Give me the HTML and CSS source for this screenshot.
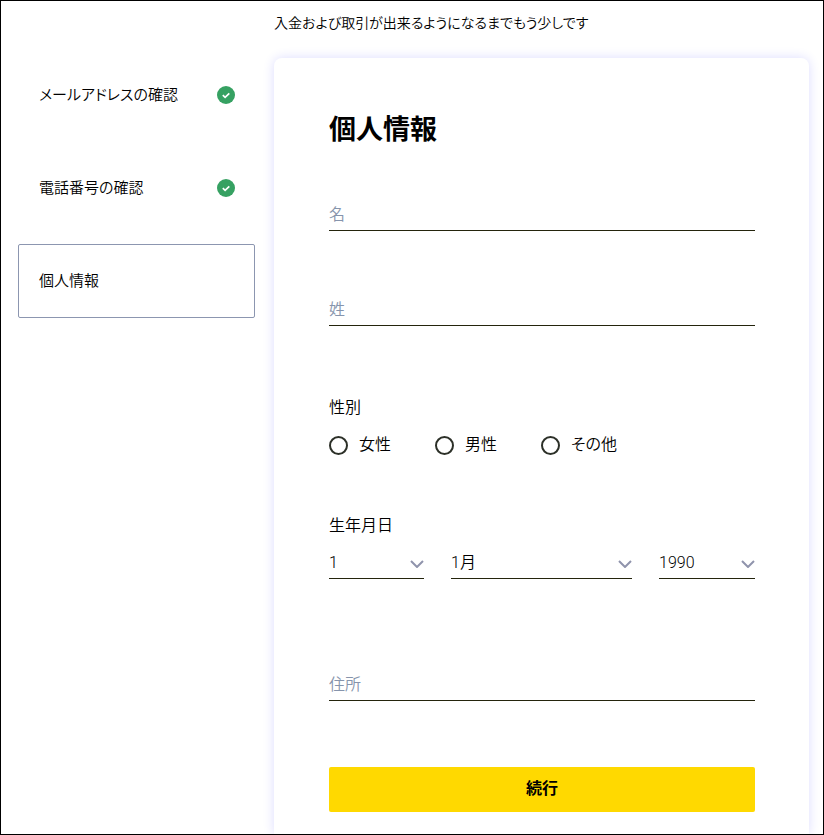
FILE: index.html
```
<!DOCTYPE html>
<html lang="ja">
<head>
    <meta charset="UTF-8">
    <meta name="viewport" content="width=device-width, initial-scale=1.0">
    <title>個人情報</title>
    <link rel="stylesheet" href="styles.css">
</head>
<body>
    <header class="page-header">
        <p class="notice">入金および取引が出来るようになるまでもう少しです</p>
    </header>

    <div class="layout">
        <!-- Steps -->
        <nav>
            <ol class="steps">
                <li class="step">
                    <span>メールアドレスの確認</span>
                    <svg class="check" viewBox="0 0 18 18" aria-hidden="true">
                        <circle cx="9" cy="9" r="9" fill="#36a162"/>
                        <path d="M5.8 9.2l2.3 2.2 4.2-4" fill="none" stroke="#fff" stroke-width="1.7"/>
                    </svg>
                </li>
                <li class="step">
                    <span>電話番号の確認</span>
                    <svg class="check" viewBox="0 0 18 18" aria-hidden="true">
                        <circle cx="9" cy="9" r="9" fill="#36a162"/>
                        <path d="M5.8 9.2l2.3 2.2 4.2-4" fill="none" stroke="#fff" stroke-width="1.7"/>
                    </svg>
                </li>
                <li class="step active" aria-current="step">
                    <span>個人情報</span>
                </li>
            </ol>
        </nav>

        <!-- Form -->
        <main class="card">
            <h1>個人情報</h1>
            <form>
                <div class="names">
                    <input class="field" type="text" name="first-name" placeholder="名" aria-label="名">
                    <input class="field" type="text" name="last-name" placeholder="姓" aria-label="姓">
                </div>

                <fieldset class="gender">
                    <legend>性別</legend>
                    <div class="radios">
                        <label class="radio"><input type="radio" name="gender" value="female">女性</label>
                        <label class="radio"><input type="radio" name="gender" value="male">男性</label>
                        <label class="radio"><input type="radio" name="gender" value="other">その他</label>
                    </div>
                </fieldset>

                <fieldset class="birthday">
                    <legend>生年月日</legend>
                    <div class="selects">
                        <div class="select">
                            <select class="field" name="day" aria-label="日">
                                <option>1</option>
                                <option>2</option>
                                <option>3</option>
                            </select>
                            <svg class="arrow" viewBox="0 0 14 8" aria-hidden="true"><path d="M1 1l6 6 6-6"/></svg>
                        </div>
                        <div class="select">
                            <select class="field" name="month" aria-label="月">
                                <option>1月</option>
                                <option>2月</option>
                                <option>3月</option>
                            </select>
                            <svg class="arrow" viewBox="0 0 14 8" aria-hidden="true"><path d="M1 1l6 6 6-6"/></svg>
                        </div>
                        <div class="select">
                            <select class="field" name="year" aria-label="年">
                                <option>1990</option>
                                <option>1991</option>
                                <option>1992</option>
                            </select>
                            <svg class="arrow" viewBox="0 0 14 8" aria-hidden="true"><path d="M1 1l6 6 6-6"/></svg>
                        </div>
                    </div>
                </fieldset>

                <input class="field address" type="text" name="address" placeholder="住所" aria-label="住所">

                <button class="submit" type="submit">続行</button>
            </form>
        </main>
    </div>
</body>
</html>
```
FILE: styles.css
```
* {
    box-sizing: border-box;
}
body {
    display: flex;
    flex-direction: column;
    min-height: 100vh;
    margin: 0;
    border: 1px solid #000;
    background: #fff;
    color: #000;
    font-family: Roboto, "Noto Sans CJK JP", sans-serif;
    font-size: 16px;
    font-weight: 350;
    line-height: 24px;
    font-feature-settings: "palt";
}
.page-header {
    padding: 10px 14px 23px 273px;
}
.notice {
    margin: 0;
    font-size: 14px;
}
.layout {
    flex: 1;
    display: grid;
    grid-template-columns: 237px 1fr;
    gap: 19px;
    padding: 0 14px 0 17px;
    overflow: hidden;
    overflow: clip;
    overflow-clip-margin: 14px;
}

/* Steps */
.steps {
    display: flex;
    flex-direction: column;
    gap: 19px;
    margin: 0;
    padding: 0;
    list-style: none;
    font-size: 15px;
}
.step {
    display: flex;
    align-items: center;
    justify-content: space-between;
    height: 74px;
    padding: 0 19px 0 20px;
    border: 1px solid transparent;
    border-radius: 2px;
}
.step.active {
    border-color: #8c96b0;
}
.check {
    width: 18px;
    height: 18px;
}

/* Form card */
.card {
    padding: 54px 54px 22px 55px;
    border-radius: 8px 8px 0 0;
    box-shadow: 0 0 12px #dcdcff;
}
h1 {
    margin: 0 0 47px;
    font-size: 27px;
    font-weight: 700;
    line-height: 36px;
}
.field {
    display: block;
    width: 100%;
    height: 36px;
    margin: 0;
    padding: 7px 0 4px;
    border: 0;
    border-bottom: 1px solid #24240c;
    border-radius: 0;
    outline: 0;
    background: none;
    color: #000;
    font: inherit;
    font-feature-settings: inherit;
    appearance: none;
}
.field::placeholder {
    color: #8694ac;
    opacity: 1;
}
.names {
    display: flex;
    flex-direction: column;
    gap: 59px;
}
fieldset {
    min-width: 0;
    margin: 0;
    padding: 0;
    border: 0;
}
legend {
    padding: 0;
}
.gender {
    margin-top: 70px;
}
.radios {
    display: flex;
    gap: 44px;
    margin-top: 13px;
}
.radio {
    display: flex;
    align-items: center;
    gap: 11px;
}
.radio input {
    width: 19px;
    height: 19px;
    margin: 0;
    border: 2px solid #2c3028;
    border-radius: 50%;
    appearance: none;
}
.radio input:checked {
    border-width: 6px;
}
.birthday {
    margin-top: 57px;
}
.selects {
    display: grid;
    grid-template-columns: 95fr 181fr 96fr;
    gap: 27px;
    margin-top: 5px;
}
.select {
    display: grid;
}
.select .field {
    padding-top: 8px;
    padding-bottom: 3px;
}
.select .field,
.arrow {
    grid-area: 1 / 1;
}
.arrow {
    align-self: center;
    justify-self: end;
    width: 14px;
    height: 8px;
    margin-top: 6px;
    fill: none;
    stroke: #9094ac;
    stroke-width: 2;
    pointer-events: none;
}
.address {
    margin-top: 86px;
}
.submit {
    display: block;
    width: 100%;
    height: 45px;
    margin-top: 66px;
    padding: 0 0 2px;
    border: 0;
    border-radius: 2px;
    background: #ffd900;
    color: #000;
    font: inherit;
    font-weight: 700;
    cursor: pointer;
}
```
